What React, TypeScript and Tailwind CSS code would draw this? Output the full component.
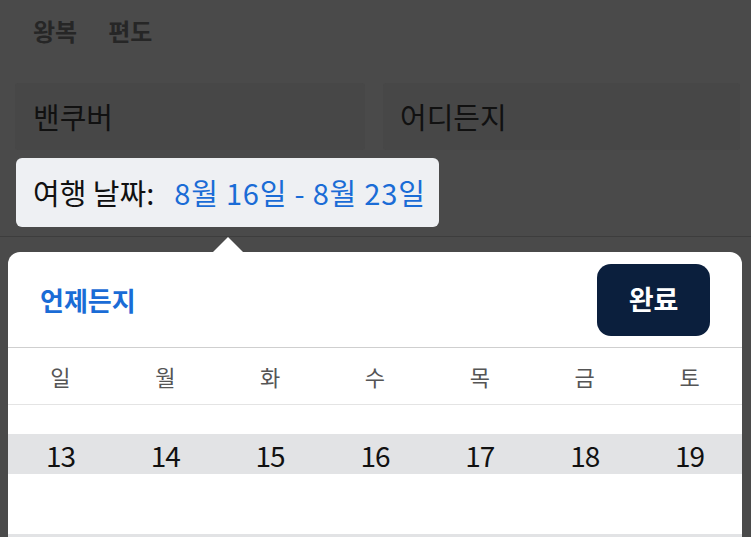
const days = ["일", "월", "화", "수", "목", "금", "토"];
const week = [13, 14, 15, 16, 17, 18, 19];

export default function App() {
  return (
    <div
      className="relative flex h-[537px] w-[751px] flex-col overflow-hidden bg-[#4a4a4a]"
      style={{ fontFamily: '"Noto Sans CJK KR", "Noto Sans", sans-serif' }}
    >
      {/* trip type tabs */}
      <div className="flex shrink-0 gap-[31px] px-[33px] pt-[13px] text-[24px] font-bold leading-[36px] text-[#262626]">
        <span>왕복</span>
        <span>편도</span>
      </div>

      {/* from / to fields */}
      <div className="mt-[34px] flex shrink-0 gap-[18px] pl-[15px]">
        <div className="flex h-[67px] w-[350px] items-center rounded-[3px] bg-[#474747] pl-[18px] text-[29px] text-[#111]">
          밴쿠버
        </div>
        <div className="flex h-[67px] w-[357px] items-center rounded-[3px] bg-[#474747] pl-[17px] text-[29px] text-[#111]">
          어디든지
        </div>
      </div>

      {/* selected dates tooltip */}
      <div className="ml-[16px] mt-[8px] flex h-[69px] w-[423px] shrink-0 items-center gap-[20px] rounded-[6px] bg-[#eef0f3] pl-[17px] text-[29px]">
        <span className="text-[#111]">여행 날짜:</span>
        <span className="tracking-[0.8px] text-[#1a6cd6]">8월 16일 - 8월 23일</span>
      </div>

      <div className="mt-[9px] h-px shrink-0 bg-[#3d3d3d]" />

      {/* calendar sheet */}
      <div className="relative ml-[8px] mt-[15px] flex w-[734px] flex-1 flex-col rounded-t-[12px] bg-white">
        <div className="absolute left-[205px] top-[-15px] h-0 w-0 border-x-[15px] border-b-[15px] border-x-transparent border-b-white" />

        <div className="flex h-[95px] shrink-0 items-center justify-between pl-[32px] pr-[32px]">
          <span className="text-[26px] font-bold text-[#1a6cd6]">언제든지</span>
          <button className="flex h-[72px] w-[113px] items-center justify-center rounded-[14px] bg-[#0b1f3d] text-[27px] font-bold text-white">
            완료
          </button>
        </div>

        <div className="h-px shrink-0 bg-[#cfcfcf]" />

        <div className="grid h-[56px] shrink-0 grid-cols-7 items-center text-[22px] text-[#555]">
          {days.map((d) => (
            <span key={d} className="text-center">
              {d}
            </span>
          ))}
        </div>

        <div className="h-px shrink-0 bg-[#e4e4e4]" />

        <div className="h-[29px] shrink-0" />

        <div className="grid h-[40px] shrink-0 grid-cols-7 items-center bg-[#e2e3e5] pb-[3px] text-[28px] tracking-[-1px] text-[#111]">
          {week.map((n) => (
            <span key={n} className="text-center">
              {n}
            </span>
          ))}
        </div>

        <div className="h-[60px] shrink-0" />
        <div className="flex-1 bg-[#e2e3e5]" />
      </div>
    </div>
  );
}
